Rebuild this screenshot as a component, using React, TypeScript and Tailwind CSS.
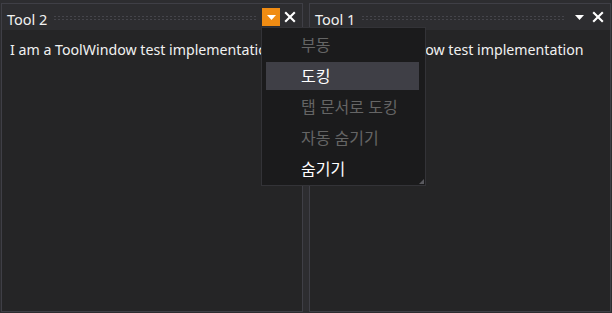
import React from "react";

const font = { fontFamily: '"Noto Sans", "Noto Sans CJK KR", sans-serif' };

function Grip() {
  return (
    <div className="mx-[6px] mt-[1px] h-[5px] flex-1 bg-[radial-gradient(circle,#45454b_0.8px,transparent_1px)] bg-[length:4px_3px]" />
  );
}

function CloseIcon() {
  return (
    <svg width="12" height="12" viewBox="0 0 12 12">
      <path d="M1.2 1.2 L10.8 10.8 M10.8 1.2 L1.2 10.8" stroke="#ffffff" strokeWidth="2.1" />
    </svg>
  );
}

function Caret() {
  return (
    <svg width="9" height="5" viewBox="0 0 9 5">
      <path d="M0 0 L9 0 L4.5 5 Z" fill="#ffffff" />
    </svg>
  );
}

function ToolPanel({ title, active }: { title: string; active?: boolean }) {
  return (
    <div className="flex flex-1 flex-col border border-[#3f3f46] bg-[#252526]">
      <div className="flex h-[26px] items-center bg-[#2d2d30] pl-[5px] pr-[6px]">
        <span className="mt-[3px] text-[14.5px] leading-[20px] text-[#f1f1f1]">{title}</span>
        <Grip />
        <div
          className={
            "flex h-[18px] w-[18px] items-center justify-center " + (active ? "bg-[#f08c13]" : "")
          }
        >
          <Caret />
        </div>
        <div className="ml-[3px] flex h-[18px] w-[13px] items-center justify-center">
          <CloseIcon />
        </div>
      </div>
      <div className="flex-1 overflow-hidden whitespace-nowrap px-[8px] pt-[10px] text-[14.2px] leading-[20px] text-[#f1f1f1]">
        I am a ToolWindow test implementation
      </div>
    </div>
  );
}

const items = [
  { label: "부동", disabled: true },
  { label: "도킹", highlight: true },
  { label: "탭 문서로 도킹", disabled: true },
  { label: "자동 숨기기", disabled: true },
  { label: "숨기기" },
];

export default function App() {
  return (
    <div className="relative h-[313px] w-[612px] bg-[#2d2d30] pb-[1px] pl-[1px] pr-[1px] pt-[3px]" style={font}>
      <div className="flex h-full gap-[6px]">
        <ToolPanel title="Tool 2" active />
        <ToolPanel title="Tool 1" />
      </div>

      <div className="absolute left-[261px] top-[27px] flex h-[159px] w-[165px] flex-col gap-[3px] border border-[#333337] bg-[#1b1b1c] pl-[4px] pr-[6px] pt-[3px]">
        {items.map((it) => (
          <div
            key={it.label}
            className={
              "flex h-[28px] items-center pl-[35px] text-[16px] " +
              (it.highlight ? "bg-[#3f3f46] text-white" : it.disabled ? "text-[#656565]" : "text-white")
            }
          >
            {it.label}
          </div>
        ))}
        <svg className="absolute bottom-[1px] right-[1px]" width="5" height="5" viewBox="0 0 5 5">
          <path d="M5 0 L5 5 L0 5 Z" fill="#5a5a5f" />
        </svg>
      </div>
    </div>
  );
}
